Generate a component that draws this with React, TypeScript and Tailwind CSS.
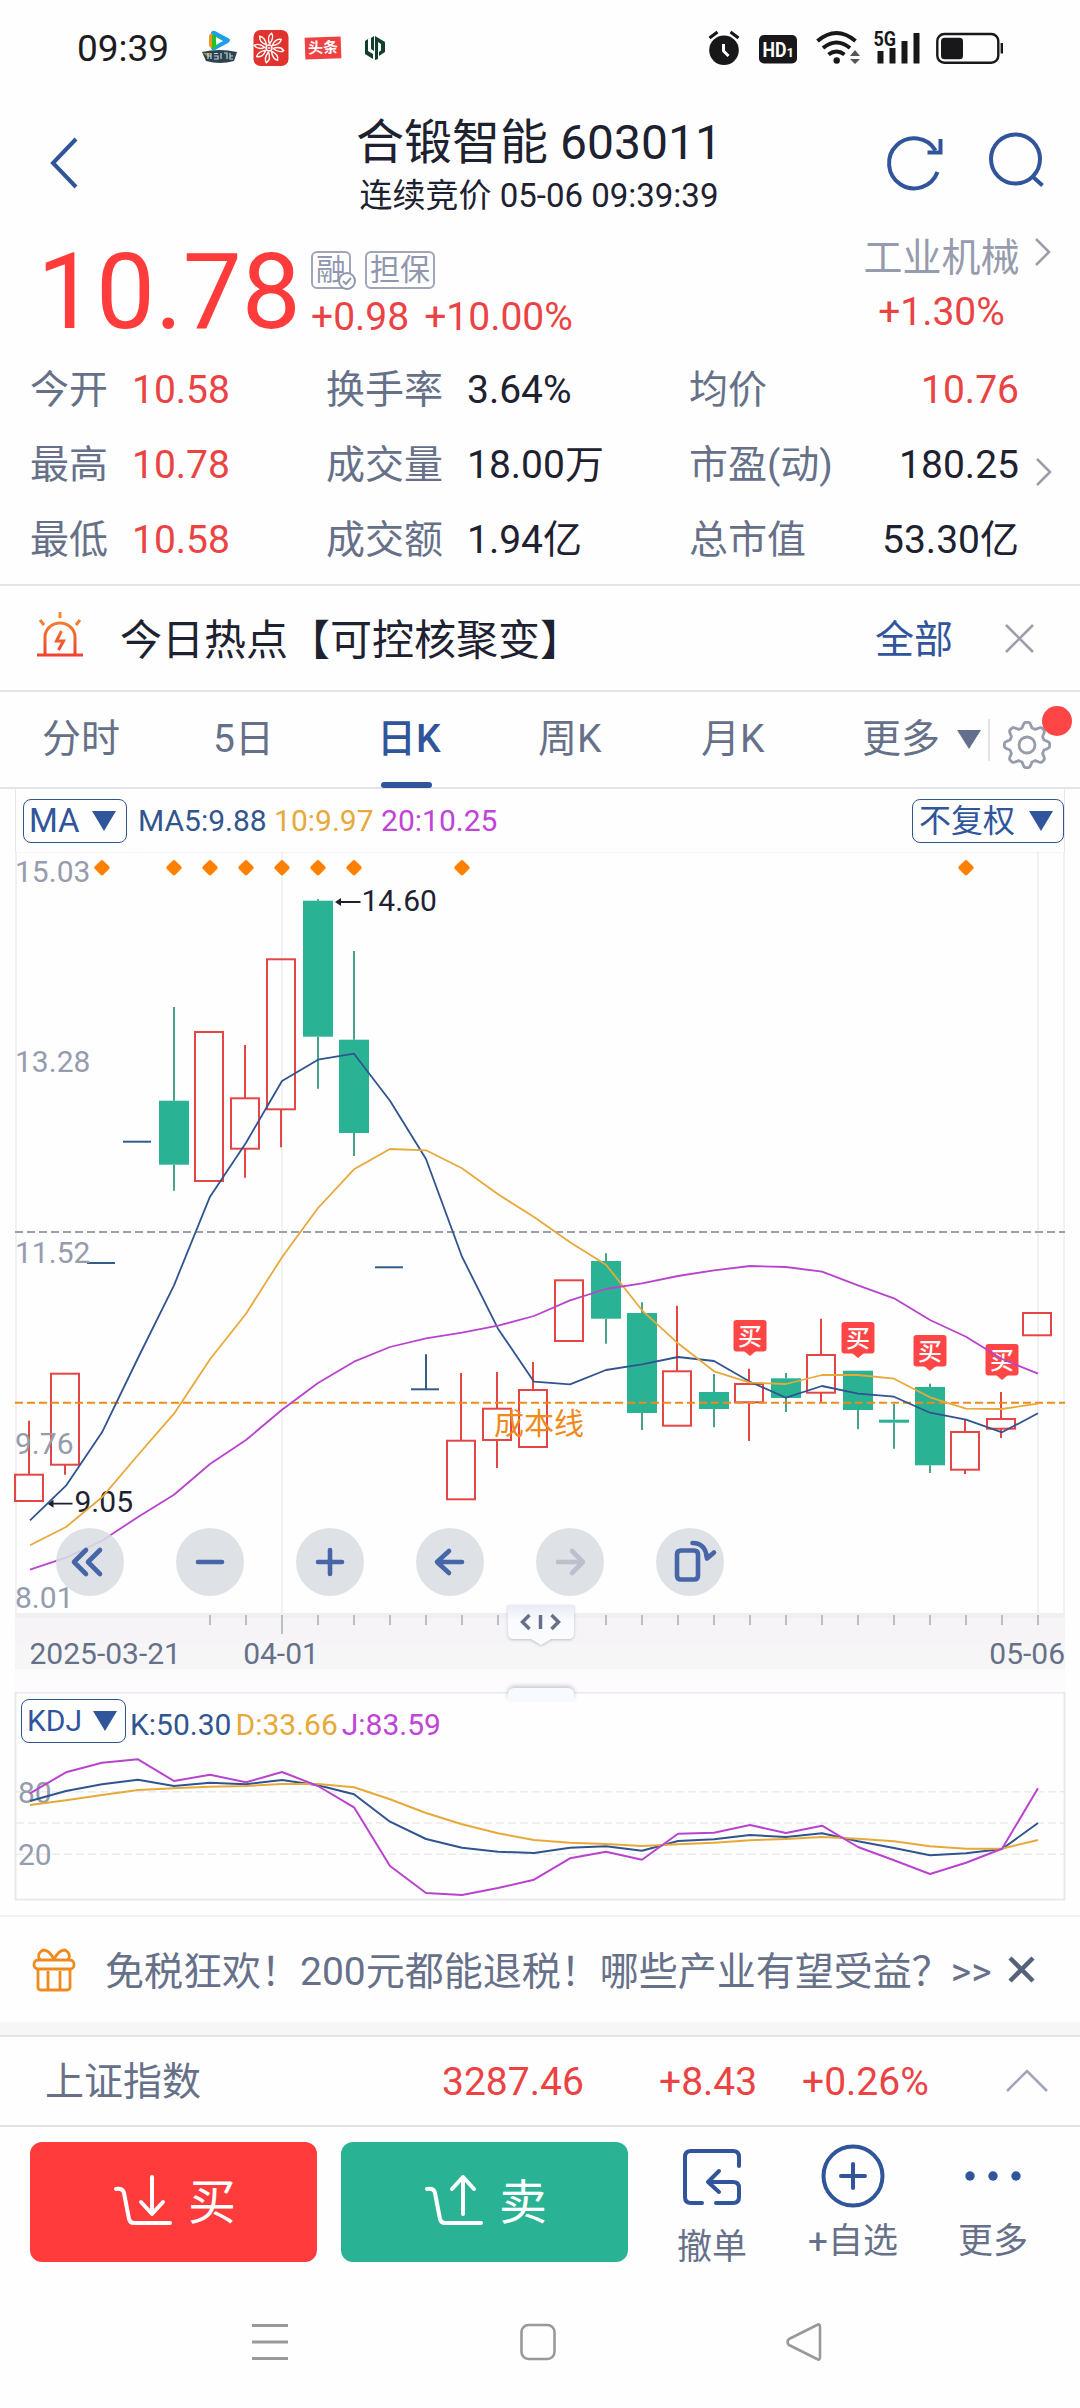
import type { ReactNode } from "react";
import { clsx } from "clsx";

type Candle = {
  kind: "up" | "down" | "flat";
  top: number;
  bottom: number;
  high?: number;
  low?: number;
};

const FIRST_X = 30;
const STEP = 36;

const candles: Candle[] = [
  { kind: "up", top: 1474.7, bottom: 1501, high: 1420.7 },
  { kind: "up", top: 1373.7, bottom: 1464.7, low: 1474.7 },
  { kind: "flat", top: 1263, bottom: 1263 },
  { kind: "flat", top: 1141.7, bottom: 1141.7 },
  { kind: "down", top: 1100.7, bottom: 1164.7, high: 1007, low: 1190.7 },
  { kind: "up", top: 1032, bottom: 1181 },
  { kind: "up", top: 1098.3, bottom: 1148.7, high: 1045, low: 1177.7 },
  { kind: "up", top: 959.3, bottom: 1109.3, low: 1147.3 },
  { kind: "down", top: 900.7, bottom: 1036.7, high: 899, low: 1088.7 },
  { kind: "down", top: 1039.7, bottom: 1133, high: 951, low: 1156 },
  { kind: "flat", top: 1267.3, bottom: 1267.3 },
  { kind: "flat", top: 1389.3, bottom: 1389.3, high: 1354.3 },
  { kind: "up", top: 1440.7, bottom: 1499.3, high: 1373 },
  { kind: "up", top: 1408.7, bottom: 1440, high: 1372, low: 1468 },
  { kind: "up", top: 1390, bottom: 1447, high: 1362 },
  { kind: "up", top: 1280.3, bottom: 1341 },
  { kind: "down", top: 1261, bottom: 1318.7, high: 1253.3, low: 1343.7 },
  { kind: "down", top: 1313, bottom: 1413, high: 1302.3, low: 1430 },
  { kind: "up", top: 1371.3, bottom: 1425.7, high: 1305.7 },
  { kind: "down", top: 1392, bottom: 1409, high: 1374, low: 1427.3 },
  { kind: "up", top: 1384, bottom: 1402.3, high: 1368.7, low: 1441 },
  { kind: "down", top: 1378.3, bottom: 1398, high: 1373, low: 1412 },
  { kind: "up", top: 1355, bottom: 1392.7, high: 1318.7, low: 1402.3 },
  { kind: "down", top: 1370.7, bottom: 1410, low: 1429.3 },
  { kind: "down", top: 1419.7, bottom: 1422.7, high: 1404, low: 1448.7 },
  { kind: "down", top: 1387, bottom: 1465.3, high: 1383.7, low: 1473 },
  { kind: "up", top: 1432, bottom: 1469.7, high: 1420, low: 1474 },
  { kind: "up", top: 1419, bottom: 1428.7, high: 1392, low: 1438 },
  { kind: "up", top: 1313, bottom: 1335.3 },
];

const ma5 = [
  1520.3, 1485.7, 1432.3, 1358, 1285.3, 1196.7, 1142.7, 1081, 1059.7, 1053.7, 1100.7, 1159, 1256.7, 1328.7, 1381.7,
  1384.3, 1370, 1364.3, 1357, 1361, 1381.7, 1397.7, 1386, 1393.7, 1396.7, 1412.7, 1419.7, 1432.3, 1413.3,
];
const ma10 = [
  1545.3, 1527, 1497.3, 1455, 1413.7, 1359.3, 1313.7, 1257.3, 1208, 1169.3, 1149, 1150.3, 1168.3, 1194.3, 1217,
  1242.3, 1264.7, 1310.3, 1343.3, 1371.3, 1382.7, 1384, 1375, 1375, 1378.7, 1397.3, 1408.7, 1409, 1403.7,
];
const ma20 = [
  1569.7, 1557.7, 1540.7, 1517, 1494.7, 1464, 1440, 1409.7, 1383, 1361.7, 1347, 1338.3, 1332.7, 1325.7, 1316,
  1300.3, 1289, 1283.3, 1276, 1270.3, 1266, 1267, 1271.7, 1285.3, 1298.3, 1320, 1336.7, 1359, 1373.7,
];

const kLine = [
  131, 121, 114.3, 109.7, 116, 112.7, 114.3, 110, 115.3, 124.3, 151.7, 169, 177.7, 181.7, 183, 177.7, 176.3, 180.7,
  171, 169.3, 165, 167, 163.3, 171.3, 178, 185.3, 183.3, 179, 153,
];
const dLine = [
  135, 130.3, 125, 120, 118.3, 116.7, 116, 114, 114, 117.3, 129.3, 143, 154.3, 163.3, 170, 172.7, 174, 176, 174.3,
  172.7, 170.3, 169, 167, 168.7, 171.3, 176.3, 178.7, 178.7, 170,
];
const jLine = [
  123.3, 102.3, 92.7, 89.3, 111, 104.7, 112.3, 102, 116, 137.3, 196, 223, 225, 218, 209.7, 188.3, 181.7, 189.7, 163.7,
  162.7, 155, 163, 155.7, 177, 190.3, 204, 192.7, 178.7, 118.3,
];

const priceLabels = [
  { text: "15.03", y: 881.7 },
  { text: "13.28", y: 1072 },
  { text: "11.52", y: 1262.7 },
  { text: "9.76", y: 1454 },
  { text: "8.01", y: 1607.7 },
];

const diamonds = [2, 4, 5, 6, 7, 8, 9, 12, 26];

const buyMarks = [
  { index: 20, y: 1320 },
  { index: 23, y: 1322 },
  { index: 25, y: 1335 },
  { index: 27, y: 1344 },
];

const stats = [
  ["今开", "10.58", "换手率", "3.64%", "均价", "10.76"],
  ["最高", "10.78", "成交量", "18.00万", "市盈(动)", "180.25"],
  ["最低", "10.58", "成交额", "1.94亿", "总市值", "53.30亿"],
];

const xAt = (i: number) => FIRST_X + i * STEP;
const toPoints = (ys: number[]) => ys.map((y, i) => `${xAt(i)},${y}`).join(" ");

// eight rounded teeth around the rim
const gearPoints = Array.from({ length: 144 }, (_, i) => {
  const a = (i / 144) * Math.PI * 2;
  const wave = Math.max(-1, Math.min(1, 1.5 * Math.cos(8 * a)));
  const r = 20.1 + 2.5 * wave;
  return `${(25 + r * Math.cos(a)).toFixed(2)},${(25 + r * Math.sin(a)).toFixed(2)}`;
}).join(" ");

function StatusBar() {
  return (
    <div className="flex h-24 items-center pl-[77px]">
      <span className="w-[125px] pt-0.5 text-[37px] leading-[96px] text-[#1c1c1e]">09:39</span>
      <svg className="h-9 w-9" viewBox="0 0 36 36">
        <path d="M9 4q0-4 4-3l13 7q4 2 0 5l-13 7q-4 1-4-3z" fill="#1f9df0" />
        <path d="M8 4q-1 1-1 3v8q0 2 2 3l2-1V4z" fill="#f7931e" />
        <path d="M10 6q0-2 2-1l9 5-9 9q-2 0-2-2z" fill="#22c326" />
        <path d="M14 7l7 4-7 4z" fill="#fff" />
        <path d="M0 22q17-4 35 0l-3 9q-14 4-28 0z" fill="#2c4450" />
        <path d="M1 23l8 0-3 4z" fill="#b98237" />
        <path d="M6 23v6M9 23v6M6 26h3M12 23.500h4M12 26h4v3h-4M19 23v6M22 23h3v6M28 23v6h3M28 26h3" stroke="#c5d2d8" strokeWidth="1.2" fill="none" />
      </svg>
      <svg className="ml-[15px] h-9 w-9" viewBox="0 0 36 36">
        <rect x="0.5" width="35" height="36" rx="7" fill="#e0332e" />
        <g fill="none" stroke="#fff" strokeWidth="1.4">
          {[8, 53, 98, 143, 188, 233, 278, 320].map((angle) => (
            <path key={angle} transform={`rotate(${angle} 16 18)`} d="M16 14q-4-7 0.500-11q3.500 4-0.500 11" />
          ))}
          <circle cx="16" cy="18" r="3" />
          <path d="M14.5 18h3" />
        </g>
      </svg>
      <span className="ml-4 flex h-[22px] w-9 -rotate-2 items-center justify-center bg-[#f04142] text-[15px] leading-none font-bold text-white">
        头条
      </span>
      <svg className="ml-6 h-6 w-5" viewBox="0 0 20 24" fill="#12402a">
        <path d="M0 5l3-2v12l5 3v5l-8-5z" />
        <path d="M6 2l3-2v15l-3-2z" />
        <path d="M10 0l10 6v10l-6 4v-4l2-1.5V8l-3-2v17l-3 1z" />
      </svg>
      <svg className="ml-[320px] h-10 w-[300px]" viewBox="706 28 300 40">
        <circle cx="725" cy="50.2" r="14.8" fill="#18181a" />
        <path d="M710.5 38l8-6M739.5 38l-8-6" stroke="#18181a" strokeWidth="3.2" />
        <path d="M724.5 44v7l5 5" stroke="#fff" strokeWidth="3" fill="none" />
        <rect x="760" y="35" width="38" height="28.5" rx="5" fill="#18181a" />
        <text x="763.5" y="57" fontSize="21" fontWeight="700" fill="#fff" textLength="24" lengthAdjust="spacingAndGlyphs">
          HD
        </text>
        <text x="787.5" y="57" fontSize="13" fontWeight="700" fill="#fff">
          1
        </text>
        <g fill="none" stroke="#18181a" strokeWidth="4">
          <path d="M818.5 41q19-16 38 0" />
          <path d="M824 48q13.5-11 27 0" />
          <path d="M829.5 54.5q8-6 16 0" />
        </g>
        <circle cx="837.7" cy="60.5" r="3.2" fill="#18181a" />
        <path d="M851 56l5-6 5 6zM851 59l5 5 5-5z" fill="#555" />
        <text x="874.5" y="46" fontSize="20" fontWeight="700" fill="#18181a" textLength="22.5" lengthAdjust="spacingAndGlyphs">
          5G
        </text>
        <path d="M878.5 51h6v12.5h-6zM890.5 48h6v15.5h-6zM902.5 41h6v22.5h-6zM914.5 33h6v30.5h-6z" fill="#18181a" />
        <rect x="938.3" y="34" width="61" height="28.7" rx="7" fill="none" stroke="#18181a" strokeWidth="2.4" />
        <rect x="942" y="37.7" width="22" height="21.5" rx="3.5" fill="#18181a" />
        <path d="M1002.8 43v10.5" stroke="#18181a" strokeWidth="2.4" />
      </svg>
    </div>
  );
}

function Header() {
  return (
    <header className="flex h-[130px] pt-3.5">
      <svg className="mt-[26px] ml-[46px] h-[54px] w-9" viewBox="0 0 36 54" fill="none" stroke="#30559b" strokeWidth="4">
        <path d="M30 3L7 27l23 24" />
      </svg>
      <div className="ml-[117px] flex w-[680px] flex-col items-center pt-0.5 text-[#1d2130]">
        <h1 className="text-[48px] leading-[62px]">合锻智能 603011</h1>
        <p className="text-[33px] leading-[43px]">连续竞价 05-06 09:39:39</p>
      </div>
      <svg className="mt-[18px] h-[66px] w-[170px]" viewBox="880 128 170 66" fill="none" stroke="#30559b" strokeWidth="4">
        <path d="M938.5 172a25 25 0 1 1-2-21.5" />
        <path d="M941.5 139v13.5h-13" />
        <circle cx="1016.5" cy="159" r="24.5" />
        <path d="M1033 176l10.5 9.5" />
      </svg>
    </header>
  );
}

function Chevron({ className }: { className?: string }) {
  return (
    <svg className={clsx("h-7 w-4", className)} viewBox="0 0 16 28" fill="none" stroke="#9a9ca8" strokeWidth="2.5">
      <path d="M1 1l13 13L1 27" />
    </svg>
  );
}

function PriceSummary() {
  return (
    <section className="flex h-[125px] pl-[37px]">
      <div className="w-[274px] text-[105px] leading-[133px] text-[#ff3b3b]">10.78</div>
      <div className="w-[550px] pt-[25px]">
        <div className="flex h-[38px] text-[30px] text-[#9096ae]">
          <span className="relative flex w-10 items-center justify-center rounded-md border-2 border-[#a0a5ba] leading-none">
            融
            <svg className="absolute -right-2 -bottom-1 h-5 w-5" viewBox="0 0 20 20">
              <circle cx="10" cy="10" r="8" fill="#fff" stroke="#9096ae" strokeWidth="2" />
              <path d="M6 10l3 3 5-6" fill="none" stroke="#9096ae" strokeWidth="2" />
            </svg>
          </span>
          <span className="ml-3.5 flex w-[70px] items-center justify-center rounded-md border-2 border-[#a0a5ba] leading-none">
            担保
          </span>
        </div>
        <div className="flex gap-[15px] pt-[5px] text-[39px] leading-[46px] text-[#eb4343]">
          <span>+0.98</span>
          <span>+10.00%</span>
        </div>
      </div>
      <div className="flex w-[161px] flex-col items-center pt-1.5 text-[39px]">
        <span className="leading-[53px] whitespace-nowrap text-[#969bad]">工业机械</span>
        <span className="leading-[54px] text-[#eb4343]">+1.30%</span>
      </div>
      <Chevron className="mt-3 ml-[13px]" />
    </section>
  );
}

function Stats() {
  return (
    <section className="relative h-[235px] border-b-2 border-[#e4e5e8] pt-0.5 text-[39px]">
      {stats.map((row, i) => (
        <div key={row[0]} className="flex h-[75px] items-center leading-[75px] whitespace-nowrap text-[#1d2130]">
          <span className="ml-[30px] w-[102px] text-[#667189]">{row[0]}</span>
          <span className="w-[194px] text-[#eb4343]">{row[1]}</span>
          <span className="w-[141px] text-[#667189]">{row[2]}</span>
          <span className="w-[222px]">{row[3]}</span>
          <span className="text-[#667189]">{row[4]}</span>
          <span className={clsx("mr-[61px] ml-auto", i === 0 && "text-[#eb4343]")}>{row[5]}</span>
        </div>
      ))}
      <Chevron className="absolute top-[107px] right-[28px]" />
    </section>
  );
}

function HotTopic() {
  return (
    <section className="flex h-[106px] items-center border-b-2 border-[#e4e5e8] pl-9">
      <svg className="-mt-2 h-[46px] w-12" viewBox="0 0 48 46" fill="none" strokeWidth="3">
        <defs>
          <linearGradient id="alarm" x1="0" y1="0" x2="0" y2="46" gradientUnits="userSpaceOnUse">
            <stop offset="0" stopColor="#f5922e" />
            <stop offset="1" stopColor="#ef4130" />
          </linearGradient>
        </defs>
        <g stroke="url(#alarm)">
          <path d="M9 43V26a15 14 0 0 1 30 0v17M24 1v6M4 9l4 5M44 9l-4 5M1 44h46" />
          <path d="M25.5 20l-5 10h7l-5 9" />
        </g>
      </svg>
      <h2 className="ml-9 pt-1.5 text-[42px] leading-[98px] text-[#1d2130]">今日热点【可控核聚变】</h2>
      <span className="ml-auto pt-1 text-[39px] leading-[100px] text-[#30559b]">全部</span>
      <svg className="mr-[46px] ml-[52px] h-[29px] w-[29px]" viewBox="0 0 29 29" stroke="#9c9dab" strokeWidth="2.6">
        <path d="M1 1l27 27M28 1L1 28" />
      </svg>
    </section>
  );
}

function Tabs() {
  return (
    <nav className="relative flex h-[97px] border-b-2 border-[#e4e3e7] pl-[42px] text-[39px] leading-[95px] text-[#667189]">
      <span className="w-[171px]">分时</span>
      <span className="w-[164px]">5日</span>
      <span className="w-[161px] font-medium text-[#30559b]">日K</span>
      <span className="w-[163px]">周K</span>
      <span className="w-[161px]">月K</span>
      <span>更多</span>
      <svg className="mt-[38px] ml-4 h-5 w-[26px]" viewBox="0 0 26 20" fill="#62708d">
        <path d="M1 0h24L13 19z" />
      </svg>
      <span className="mt-[27px] ml-1.5 h-[42px] w-0.5 bg-[#e2e3e8]" />
      <svg className="mt-7 ml-3 h-[50px] w-[50px]" viewBox="0 0 50 50" fill="none" stroke="#969cac" strokeWidth="2.8">
        <polygon points={gearPoints} strokeLinejoin="round" />
        <circle cx="25" cy="25" r="8" />
      </svg>
      <span className="absolute top-3.5 left-[1042px] h-[30px] w-[30px] rounded-full bg-[#ff4545]" />
      <span className="absolute top-[90px] left-[381px] h-1.5 w-[51px] rounded-sm bg-[#30559b]" />
    </nav>
  );
}

function Picker({ children, className }: { children: ReactNode; className?: string }) {
  return (
    <span
      className={clsx(
        "flex h-11 items-center justify-between rounded-lg border border-[#30558b] leading-[42px] text-[#30559b]",
        className
      )}
    >
      {children}
      <svg className="h-5 w-6" viewBox="0 0 24 20" fill="#30559b">
        <path d="M0 0h24L12 20z" />
      </svg>
    </span>
  );
}

function CandleShape({ candle, index }: { candle: Candle; index: number }) {
  const { kind, top, bottom, high, low } = candle;
  const x = kind === "up" ? xAt(index) - 1 : xAt(index);
  if (kind === "flat") {
    return (
      <g stroke="#345c88" strokeWidth="2">
        <path d={`M${x - 15} ${top}h28`} />
        {high && <path d={`M${x} ${high}V${top}`} />}
      </g>
    );
  }
  const color = kind === "up" ? "#e64545" : "#45a38c";
  return (
    <g>
      {high && <path d={`M${x} ${high}V${top}`} stroke={color} strokeWidth="2" />}
      {low && <path d={`M${x} ${bottom}V${low}`} stroke={color} strokeWidth="2" />}
      {kind === "up" ? (
        <rect x={x - 14} y={top} width="28" height={bottom - top} fill="none" stroke={color} strokeWidth="2" />
      ) : (
        <rect x={x - 15} y={top} width="30" height={bottom - top} fill="#2ab295" />
      )}
    </g>
  );
}

function CandleChart() {
  return (
    <svg className="block h-[840px] w-full" viewBox="0 852 1080 840">
      <rect x="15" y="1668" width="1050" height="24" fill="#fdfbfe" />
      <rect x="15" y="1613" width="1050" height="56" fill="#f6f6f7" />
      <rect x="15" y="1618" width="1050" height="26" fill="#f6f4f7" />
      <rect x="15" y="1613" width="1050" height="5" fill="#f0eff1" />
      <path d="M16 852V1613M1064 852V1613M282 852V1613M1038 852V1613" stroke="#f1f1f3" strokeWidth="2" />
      <path d="M15 852H1065" stroke="#ececee" strokeWidth="1.5" strokeDasharray="3 1" />
      <g fill="#ff8000">
        {diamonds.map((i) => (
          <rect key={i} x={xAt(i) - 6} y="861.7" width="12" height="12" rx="2" transform={`rotate(45 ${xAt(i)} 867.7)`} />
        ))}
      </g>
      <path d="M15 1232H1065" stroke="#98a0ad" strokeWidth="2" strokeDasharray="8 4" />
      {candles.map((candle, i) => (
        <CandleShape key={i} candle={candle} index={i} />
      ))}
      <path d="M15 1402.7H1065" stroke="#ee8b1c" strokeWidth="2" strokeDasharray="8 4" />
      <text x="494" y="1434" fontSize="30" fill="#ee8b1c">
        成本线
      </text>
      {buyMarks.map(({ index, y }) => (
        <g key={index}>
          <rect x={xAt(index) - 16.5} y={y} width="33" height="31.5" rx="3" fill="#ff4545" />
          <path d={`M${xAt(index) - 6} ${y + 31}h12l-6 5z`} fill="#ff4545" />
          <text x={xAt(index)} y={y + 25} fontSize="24" fontWeight="500" textAnchor="middle" fill="#fff">
            买
          </text>
        </g>
      ))}
      <g fill="#959cad" fontSize="30">
        {priceLabels.map(({ text, y }) => (
          <text key={text} x="15" y={y}>
            {text}
          </text>
        ))}
      </g>
      <g fill="#1d2130" fontSize="30">
        <path d="M340 902h20.5M52 1503.7h20.5" stroke="#1d2130" strokeWidth="1.8" />
        <path d="M335 902l6-4v8zM47.5 1503.7l6-4v8z" />
        <text x="361.5" y="911">
          14.60
        </text>
        <text x="74.5" y="1512.3">
          9.05
        </text>
      </g>
      <g fill="none" strokeWidth="1.8" strokeLinejoin="round">
        <polyline points={toPoints(ma5)} stroke="#30548f" />
        <polyline points={toPoints(ma10)} stroke="#e6a93a" />
        <polyline points={toPoints(ma20)} stroke="#b844cd" />
      </g>
      <g stroke="#b9c0ca" strokeWidth="2">
        {Array.from({ length: 24 }, (_, i) => i + 5).map((i) => (
          <path key={i} d={`M${xAt(i)} 1615v${i === 7 ? 19 : 10}`} />
        ))}
      </g>
      <g fill="#667189" fontSize="30">
        <text x="29.5" y="1663.7">
          2025-03-21
        </text>
        <text x="281" y="1663.7" textAnchor="middle">
          04-01
        </text>
        <text x="1065" y="1663.7" textAnchor="end">
          05-06
        </text>
      </g>
    </svg>
  );
}

const tools: { id: string; paths: string; muted?: boolean }[] = [
  { id: "fast-back", paths: "M30 22L18 34l12 12M44 22L32 34l12 12" },
  { id: "zoom-out", paths: "M22 34h24" },
  { id: "zoom-in", paths: "M22 34h24M34 22v24" },
  { id: "back", paths: "M46 34H22M33 23L21 34l12 11" },
  { id: "forward", paths: "M22 34h25M36 23l11 11-11 11", muted: true },
  { id: "rotate", paths: "M25 22.5h13q4 0 4 4v21q0 4-4 4h-13q-4 0-4-4v-21q0-4 4-4zM36.500 15q13 0 14.500 15M50 26l1 4.500 7-6" },
];

function ChartTools() {
  return (
    <div className="absolute top-[676px] left-14 flex gap-[52px]">
      {tools.map(({ id, paths, muted }) => (
        <svg key={id} className="h-[68px] w-[68px]" viewBox="0 0 68 68">
          <circle cx="34" cy="34" r="34" fill="#d9dde2" fillOpacity="0.88" />
          <path d={paths} fill="none" stroke={muted ? "#bbbfce" : "#4666a8"} strokeWidth="4.6" strokeLinecap="round" strokeLinejoin="round" />
        </svg>
      ))}
    </div>
  );
}

function DragHandle() {
  return (
    <svg className="absolute top-[748px] left-[500px] h-[54px] w-20" viewBox="500 1600 80 54">
      <defs>
        <linearGradient id="handle" x1="0" y1="0" x2="0" y2="1">
          <stop offset="0" stopColor="#e9ebf5" />
          <stop offset="0.4" stopColor="#f9fbff" />
        </linearGradient>
        <filter id="shade" x="-20%" y="-20%" width="140%" height="150%">
          <feDropShadow dx="0" dy="1" stdDeviation="1.5" floodColor="#8a90a5" floodOpacity="0.55" />
        </filter>
      </defs>
      <path d="M507.500 1605H574V1633q0 6-6 6h-17l-10 6-10-6h-17q-6 0-6-6z" fill="url(#handle)" filter="url(#shade)" />
      <path d="M529.500 1615l-7 7 7 7M551.500 1615l7 7-7 7" fill="none" stroke="#667189" strokeWidth="3.500" />
      <path d="M540.5 1615v14" stroke="#667189" strokeWidth="3.5" />
    </svg>
  );
}

function KChart() {
  return (
    <section>
      <div className="mx-[15px] flex h-[63px] items-center border-x border-[#e8e8eb] pl-[7px]">
        <Picker className="w-[104px] pr-2.5 pl-[5px] text-[33px]">MA</Picker>
        <p className="ml-[11px] text-[30px] leading-[60px] text-[#30558f]">
          MA5:9.88 <span className="text-[#e6a93a]">10:9.97</span> <span className="text-[#c044d6]">20:10.25</span>
        </p>
        <Picker className="ml-auto w-[152px] pr-2.5 pl-1.5 text-[32px]">不复权</Picker>
      </div>
      <div className="relative">
        <CandleChart />
        <ChartTools />
        <DragHandle />
      </div>
    </section>
  );
}

function KdjChart() {
  return (
    <section className="relative h-[225px] border-b-2 border-[#f2f2f4]">
      <svg className="block h-[210px] w-full" viewBox="0 22 1080 210">
        <path d="M15.5 22.5H1064.5V229.5H15.5z" fill="none" stroke="#e9e9ec" strokeWidth="2" />
        <path d="M16 121.7H1064M16 153H1064M16 184.3H1064" stroke="#ebebed" strokeWidth="1.5" strokeDasharray="8 4" />
        <g fill="#959cad" fontSize="30">
          <text x="18" y="132.5">
            80
          </text>
          <text x="18" y="195">
            20
          </text>
        </g>
        <g fill="none" strokeWidth="2" strokeLinejoin="round">
          <polyline points={toPoints(kLine)} stroke="#30548f" />
          <polyline points={toPoints(dLine)} stroke="#e6a93a" />
          <polyline points={toPoints(jLine)} stroke="#b844cd" />
        </g>
      </svg>
      <div className="absolute top-[7px] left-[21px] flex">
        <Picker className="w-[105px] pr-2 pl-[5px] text-[30px]">KDJ</Picker>
        <p className="ml-1 flex gap-1 pt-1 text-[30px] leading-[44px]">
          <span className="text-[#30558f]">K:50.30</span>
          <span className="text-[#e6a93a]">D:33.66</span>
          <span className="text-[#c044d6]">J:83.59</span>
        </p>
      </div>
      <span className="absolute -top-1 left-[508px] h-3 w-[66px] rounded-t-md bg-[#f7faff] shadow-[0_-2px_4px_rgba(130,135,150,0.45)]" />
    </section>
  );
}

function Promo() {
  return (
    <section className="flex h-[118px] items-center border-b-[13px] border-[#f6f6f7] pl-8">
      <svg className="h-11 w-11" viewBox="0 0 44 44" fill="none" stroke="#f08a1c" strokeWidth="2.8">
        <rect x="2" y="12" width="40" height="9" rx="4" />
        <path d="M6 21v18q0 3 3 3h26q3 0 3-3V21M16 23v19M28 23v19M22 12q-4-10-11-10q-7 4-3 10M22 12q4-10 11-10q7 4 3 10" />
      </svg>
      <p className="ml-[29px] flex pt-1 text-[39px] leading-[100px] whitespace-nowrap text-[#667189]">
        免税狂欢！200元都能退税！哪些产业有望受益？<span>&gt;&gt;</span>
      </p>
      <svg className="mr-[45px] ml-auto h-[27px] w-[27px] shrink-0" viewBox="0 0 27 27" stroke="#56617c" strokeWidth="4.5">
        <path d="M2 2l23 23M25 2L2 25" />
      </svg>
    </section>
  );
}

function IndexRow() {
  return (
    <section className="flex h-[92px] items-center border-y-2 border-[#e1e2e9] pl-[45px] text-[39px] leading-[94px] text-[#eb4343]">
      <span className="w-[397px] pt-0.5 text-[#667189]">上证指数</span>
      <span className="w-[217px] pt-0.5">3287.46</span>
      <span className="w-[143px] pt-0.5">+8.43</span>
      <span className="pt-0.5">+0.26%</span>
      <svg className="mr-[32px] ml-auto h-6 w-[42px]" viewBox="0 0 42 24" fill="none" stroke="#a2a5b4" strokeWidth="2.5">
        <path d="M1 22L21 2l20 20" />
      </svg>
    </section>
  );
}

function TradeButton({ label, side }: { label: string; side: "buy" | "sell" }) {
  return (
    <button
      className={clsx(
        "flex h-[120px] w-[287px] items-center justify-center gap-4 rounded-xl pl-[3px] text-[48px] leading-none text-white",
        side === "buy" ? "bg-[#ff3b3c]" : "bg-[#2ab294]"
      )}
    >
      <svg className="-mt-1 h-[52px] w-[58px]" viewBox="0 0 58 52" fill="none" stroke="#fff" strokeWidth="4" strokeLinecap="round" strokeLinejoin="round">
        <path d="M2 15q7-1 8 4l5 26q1 4 5 4h36" />
        <path d={side === "buy" ? "M38 3v36M27 28l11 12 11-12" : "M38 40V4M27 15L38 3l11 12"} />
      </svg>
      <span className="pt-0.5">{label}</span>
    </button>
  );
}

function TradeBar() {
  return (
    <section className="flex h-[175px] items-start pt-[15px] pl-[30px] text-[35px] leading-[46px] text-[#667189]">
      <TradeButton label="买" side="buy" />
      <span className="w-6" />
      <TradeButton label="卖" side="sell" />
      <div className="ml-[49px] flex w-[70px] flex-col items-center pt-1.5">
        <svg className="h-[60px] w-[60px]" viewBox="0 0 60 60" fill="none" stroke="#30559b" strokeWidth="4" strokeLinecap="round" strokeLinejoin="round">
          <path d="M57 18V9q0-6-6-6H9q-6 0-6 6v40q0 6 6 6h11M34 55h17q6 0 6-6V40q0-6-6-6H26M37 23L26 34l11 10" />
        </svg>
        <span className="mt-[17px] whitespace-nowrap">撤单</span>
      </div>
      <div className="ml-[58px] flex w-24 flex-col items-center pt-0.5">
        <svg className="h-16 w-16" viewBox="0 0 64 64" fill="none" stroke="#30559b" strokeWidth="4" strokeLinecap="round">
          <circle cx="32" cy="32" r="29.5" />
          <path d="M20 32h24M32 20v24" />
        </svg>
        <span className="mt-[11px] whitespace-nowrap">+自选</span>
      </div>
      <div className="ml-14 flex w-[72px] flex-col items-center pt-0.5">
        <svg className="h-16 w-16" viewBox="0 0 64 64" fill="#30559b">
          <circle cx="9" cy="32" r="4.7" />
          <circle cx="32" cy="32" r="4.7" />
          <circle cx="55" cy="32" r="4.7" />
        </svg>
        <span className="mt-[11px] whitespace-nowrap">更多</span>
      </div>
    </section>
  );
}

function SystemNav() {
  return (
    <nav className="flex h-[106px] pt-[20px] pl-[250px]">
      <svg className="h-10 w-10" viewBox="0 0 40 40" stroke="#999" strokeWidth="3">
        <path d="M2 3.5h36M2 20h36M2 36.5h36" />
      </svg>
      <svg className="ml-[228px] h-10 w-10" viewBox="0 0 40 40" fill="none" stroke="#999" strokeWidth="2.6">
        <rect x="3.5" y="3" width="33" height="34" rx="7" />
      </svg>
      <svg className="ml-[226px] h-10 w-10" viewBox="0 0 40 40" fill="none" stroke="#999" strokeWidth="2.6" strokeLinejoin="round">
        <path d="M33 3q3-2 3 2v30q0 4-3 2L5 23q-3-3 0-6z" />
      </svg>
    </nav>
  );
}

export default function App() {
  return (
    <div className="relative h-[2408px] w-[1080px] overflow-hidden bg-[#fefefe] [font-family:Roboto,'Noto_Sans_CJK_SC',sans-serif]">
      <StatusBar />
      <Header />
      <PriceSummary />
      <Stats />
      <HotTopic />
      <Tabs />
      <KChart />
      <KdjChart />
      <Promo />
      <IndexRow />
      <TradeBar />
      <SystemNav />
    </div>
  );
}
